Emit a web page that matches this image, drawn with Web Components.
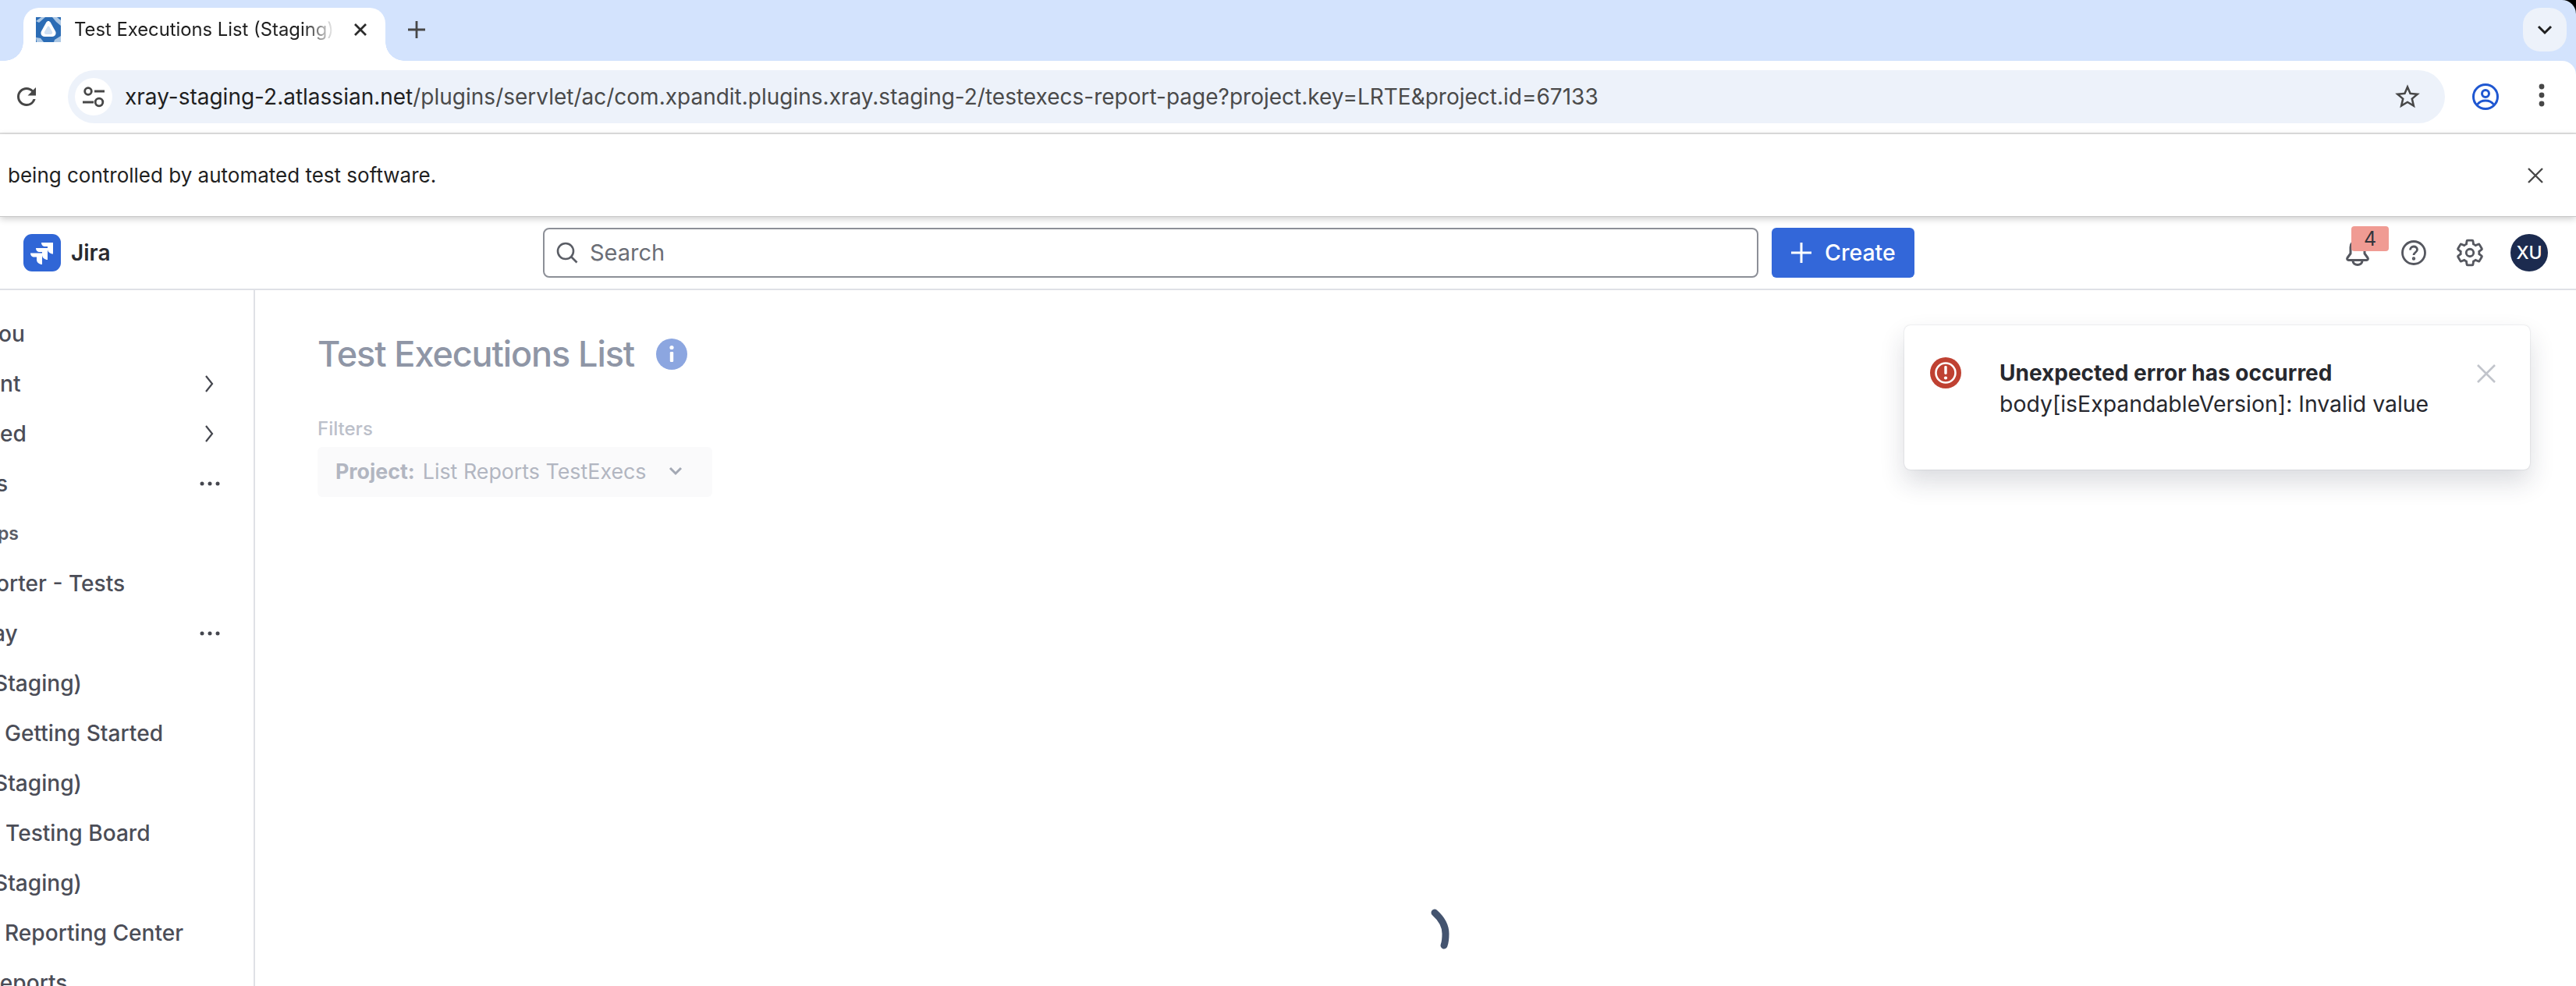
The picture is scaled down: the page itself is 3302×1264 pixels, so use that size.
<!DOCTYPE html>
<html>
<head>
<meta charset="utf-8">
<title>Test Executions List</title>
<style>
  html, body { margin: 0; padding: 0; background: #fff; }
  body { width: 3302px; height: 1264px; overflow: hidden; font-family: Inter, "Liberation Sans", sans-serif; }
</style>
</head>
<body>
<browser-tabs></browser-tabs>
<browser-toolbar></browser-toolbar>
<browser-infobar></browser-infobar>
<jira-app>
  <jira-topbar slot="top"></jira-topbar>
  <jira-sidebar slot="side"></jira-sidebar>
  <report-view slot="main"></report-view>
  <error-toast slot="over"></error-toast>
  <busy-spinner slot="over"></busy-spinner>
</jira-app>
<script>
class BrowserTabs extends HTMLElement {
  constructor() {
    super();
    this.attachShadow({ mode: 'open' });
    this.shadowRoot.innerHTML = `
      <style>
        :host { display: block; height: 78px; background: #000; }
        .strip {
          height: 78px; box-sizing: border-box; padding: 10px 12px 0 30px;
          background: #d3e3fd; border-top-right-radius: 18px;
          display: flex; align-items: flex-start;
        }
        .tab {
          position: relative; width: 464px; height: 68px; box-sizing: border-box;
          padding: 12px 22px 0 16px; background: #fff;
          border-radius: 20px 20px 0 0; display: flex; align-items: flex-start;
        }
        .tab::before, .tab::after {
          content: ""; position: absolute; bottom: 0; width: 24px; height: 24px;
        }
        .tab::before { left: -24px; background: radial-gradient(circle at 0 0, transparent 23.5px, #fff 24px); }
        .tab::after { right: -24px; background: radial-gradient(circle at 100% 0, transparent 23.5px, #fff 24px); }
        .fav { width: 32px; height: 32px; flex: none; }
        .title {
          margin-left: 17px; width: 335px; height: 32px; flex: none;
          font: 400 23.800px/32px Inter, sans-serif; color: #1f1f1f; white-space: nowrap; overflow: hidden;
          -webkit-mask-image: linear-gradient(to right, #000 88%, transparent 100%);
          mask-image: linear-gradient(to right, #000 88%, transparent 100%);
        }
        .close { margin-left: 22px; width: 20px; height: 32px; flex: none; }
        .plus { margin: 14px 0 0 26px; width: 28px; height: 28px; flex: none; }
        .list {
          margin-left: auto; width: 56px; height: 56px; background: #edf2fa; border-radius: 22px;
          display: flex; align-items: center; justify-content: center;
        }
      </style>
      <div class="strip">
        <div class="tab">
          <svg class="fav" viewBox="0 0 32 32">
            <rect width="32" height="32" fill="#2b6cb5"/>
            <path d="M0 5 7 0h5L4 7zM21 0h6l5 4v7l-6-5zM0 26l6 1 4 5H1zM24 29l8-5v8h-9z" fill="#d7e5f4" opacity=".75"/>
            <path d="M16 5c1 0 2 .6 2.600 1.600L25 18c1.600 3-.2 7-4 7H11c-3.800 0-5.600-4-4-7l6.400-11.400C14 5.600 15 5 16 5z" fill="#fff"/>
            <path d="M16 11.500c-.6 0-1 .4-1.300 .9L11.200 18.500c-1 1.900 .1 3.500 2 3.500h5.600c1.900 0 3-1.600 2-3.500l-3.500-6.100c-.3-.5-.7-.9-1.300-.9z" fill="#cfe0f3"/>
          </svg>
          <div class="title">Test Executions List (Staging)</div>
          <svg class="close" viewBox="0 0 20 32"><path d="M3 9l14 14M17 9L3 23" stroke="#2b2b2b" stroke-width="2.800" fill="none"/></svg>
        </div>
        <svg class="plus" viewBox="0 0 28 28"><path d="M14 3v22M3 14h22" stroke="#474747" stroke-width="2.800" fill="none"/></svg>
        <div class="list">
          <svg width="20" height="14" viewBox="0 0 20 14"><path d="M2 3l8 8 8-8" stroke="#1f1f1f" stroke-width="3" fill="none"/></svg>
        </div>
      </div>
    `;
  }
}
customElements.define('browser-tabs', BrowserTabs);

class BrowserToolbar extends HTMLElement {
  constructor() {
    super();
    this.attachShadow({ mode: 'open' });
    this.shadowRoot.innerHTML = `
      <style>
        :host { display: block; height: 94px; background: #d3e3fd; }
        .bar {
          height: 94px; box-sizing: border-box; background: #fff;
          border-top-right-radius: 18px; border-bottom: 2px solid #e1e1e1;
          padding: 12px 28px 0 16px; display: flex; align-items: flex-start;
        }
        .reload { width: 36px; height: 36px; margin-top: 16px; flex: none; }
        .omni {
          margin-left: 35px; width: 3047px; height: 68px; flex: none; box-sizing: border-box;
          padding: 10px 29px 0 9px; background: #edf2fa; border-radius: 34px;
          display: flex; align-items: flex-start;
        }
        .tune {
          width: 48px; height: 48px; border-radius: 50%; background: #fff; flex: none;
          display: flex; align-items: center; justify-content: center;
        }
        .url {
          margin-left: 16px; font: 400 28px/48px Inter, sans-serif;
          color: #4a4a4a; white-space: nowrap;
        }
        .url b { font-weight: 400; color: #1f1f1f; }
        .star { margin-left: auto; margin-top: 5px; width: 38px; height: 38px; flex: none; }
        .who { width: 36px; height: 36px; margin: 16px 0 0 34px; flex: none; }
        .dots { width: 10px; height: 32px; margin: 16px 0 0 49px; flex: none; }
      </style>
      <div class="bar">
        <svg class="reload" viewBox="0 0 24 24"><path fill="#474747" d="M17.650 6.350A7.958 7.958 0 0 0 12 4c-4.420 0-7.990 3.580-7.990 8s3.570 8 7.990 8c3.730 0 6.840-2.550 7.730-6h-2.080A5.990 5.990 0 0 1 12 18c-3.310 0-6-2.690-6-6s2.690-6 6-6c1.660 0 3.140.69 4.220 1.780L13 11h7V4l-2.350 2.350z"/></svg>
        <div class="omni">
          <div class="tune">
            <svg width="36" height="32" viewBox="0 0 36 32" fill="none" stroke="#474747" stroke-width="2.800">
              <circle cx="11" cy="9" r="4.300"/><path d="M19 9h13M4 23h14"/><circle cx="25" cy="23" r="4.800"/>
            </svg>
          </div>
          <div class="url"><b>xray-staging-2.atlassian.net</b>/plugins/servlet/ac/com.xpandit.plugins.xray.staging-2/testexecs-report-page?project.key=LRTE&amp;project.id=67133</div>
          <svg class="star" viewBox="0 0 24 24"><path fill="#474747" d="M22 9.240l-7.190-.62L12 2 9.190 8.630 2 9.240l5.460 4.730L5.820 21 12 17.270 18.180 21l-1.630-7.030L22 9.240zM12 15.400l-3.760 2.270 1-4.280-3.320-2.880 4.380-.38L12 6.100l1.710 4.040 4.380.38-3.320 2.880 1 4.280L12 15.400z"/></svg>
        </div>
        <svg class="who" viewBox="0 0 36 36" fill="none" stroke="#1f57d1" stroke-width="3">
          <circle cx="18" cy="18" r="15.500"/><circle cx="18" cy="14" r="4.500"/><path d="M7.500 28c2.500-3.500 6-5 10.500-5s8 1.500 10.500 5"/>
        </svg>
        <svg class="dots" viewBox="0 0 10 32" fill="#474747"><circle cx="5" cy="5" r="3.400"/><circle cx="5" cy="16" r="3.400"/><circle cx="5" cy="27" r="3.400"/></svg>
      </div>
    `;
  }
}
customElements.define('browser-toolbar', BrowserToolbar);

class BrowserInfobar extends HTMLElement {
  constructor() {
    super();
    this.attachShadow({ mode: 'open' });
    this.shadowRoot.innerHTML = `
      <style>
        :host {
          display: flex; position: relative; z-index: 3; height: 105px; box-sizing: border-box;
          padding: 0 42px 0 10px; align-items: center; justify-content: space-between; background: #fff;
          box-shadow: 0 1px 0 #c9c9c9, 0 3px 9px rgba(0,0,0,.22);
        }
        span { font: 400 26px/32px Inter, sans-serif; color: #1f1f1f; }
      </style>
      <span>being controlled by automated test software.</span>
      <svg width="20" height="20" viewBox="0 0 20 20"><path d="M1 1l18 18M19 1L1 19" stroke="#474747" stroke-width="2.400" fill="none"/></svg>
    `;
  }
}
customElements.define('browser-infobar', BrowserInfobar);

class JiraApp extends HTMLElement {
  constructor() {
    super();
    this.attachShadow({ mode: 'open' });
    this.shadowRoot.innerHTML = `
      <style>
        :host { display: block; position: relative; height: 987px; overflow: hidden; background: #fff; }
        .body { display: flex; height: 892px; }
      </style>
      <slot name="top"></slot>
      <div class="body">
        <slot name="side"></slot>
        <slot name="main"></slot>
      </div>
      <slot name="over"></slot>
    `;
  }
}
customElements.define('jira-app', JiraApp);

class JiraTopbar extends HTMLElement {
  constructor() {
    super();
    this.attachShadow({ mode: 'open' });
    this.shadowRoot.innerHTML = `
      <style>
        :host {
          display: flex; height: 95px; box-sizing: border-box; border-bottom: 2px solid #dfe1e6;
          padding: 0 36px 0 30px; align-items: center; background: #fff;
        }
        .mark { width: 48px; height: 48px; flex: none; }
        .name { margin-left: 13px; width: 605px; font: 600 28px/34px Inter, sans-serif; color: #292a2e; }
        .search {
          width: 1558px; height: 64px; box-sizing: border-box; flex: none;
          border: 2px solid #8c8f97; border-radius: 8px; display: flex; align-items: center; padding-left: 15px;
        }
        .search span { margin-left: 15px; font: 400 29px/36px Inter, sans-serif; color: #6b6e76; }
        .create {
          margin-left: 17px; width: 183px; height: 64px; flex: none; box-sizing: border-box; border-radius: 6px;
          background: #3367d9; color: #fff; display: flex; align-items: center; padding-left: 24px;
          font: 500 28.500px/36px Inter, sans-serif;
        }
        .create span { margin-left: 16px; }
        .right { margin-left: auto; display: flex; align-items: center; }
        .bell { position: relative; width: 40px; height: 48px; margin-right: 38px; }
        .badge {
          position: absolute; left: 14px; top: -10px; width: 48px; height: 32px; background: #f09b93;
          border-radius: 4px; color: #33353c; font: 400 25px/32px Inter, sans-serif; text-align: center;
        }
        .help { width: 32px; height: 32px; margin-right: 37px; }
        .gear { width: 38px; height: 38px; margin-right: 33px; }
        .avatar {
          width: 48px; height: 48px; border-radius: 50%; background: #1c2b4f; color: #fff;
          font: 500 23px/48px Inter, sans-serif; text-align: center;
        }
      </style>
      <svg class="mark" viewBox="0 0 48 48">
        <rect width="48" height="48" rx="11" fill="#3066d6"/>
        <path fill="#fff" d="M23 11h15v14.500c-3.500 0-7-2.500-7-6V16h-3c-3 0-5-2-5-5z"/>
        <path fill="#fff" d="M16 18h15v15c-3.500 0-7-2.500-7-6v-4h-3c-3 0-5-2-5-5z"/>
        <path fill="#fff" d="M9 24.500h15V39c-3.500 0-7-2.500-7-6v-3.500h-3c-3 0-5-2-5-5z"/>
      </svg>
      <div class="name">Jira</div>
      <div class="search">
        <svg width="28" height="28" viewBox="0 0 28 28" fill="none" stroke="#5a5d65" stroke-width="2.600"><circle cx="12" cy="12" r="10"/><path d="M19 19l7.500 7.500"/></svg>
        <span>Search</span>
      </div>
      <div class="create">
        <svg width="28" height="28" viewBox="0 0 28 28"><path d="M14 1v26M1 14h26" stroke="#fff" stroke-width="3" fill="none"/></svg>
        <span>Create</span>
      </div>
      <div class="right">
        <div class="bell">
          <svg width="40" height="48" viewBox="0 0 40 48" fill="none" stroke="#55575f" stroke-width="3" stroke-linejoin="round">
            <path d="M22 8a9 9 0 0 0-9 9v8l-4 5.500c-1 1.500 0 3 1.500 3h23c1.500 0 2.500-1.500 1.500-3l-4-5.500v-8a9 9 0 0 0-9-9z"/><path d="M16 34.500a6 5 0 0 0 12 0"/>
          </svg>
          <div class="badge">4</div>
        </div>
        <svg class="help" viewBox="0 0 32 32" fill="none" stroke="#55575f" stroke-width="2.800">
          <circle cx="16" cy="16" r="14.500"/><path d="M11.500 12.500c0-2.800 2-4.500 4.500-4.500s4.500 1.700 4.500 4c0 3.500-4.500 3.500-4.500 7"/><circle cx="16" cy="23.500" r=".8" fill="#55575f"/>
        </svg>
        <svg class="gear" viewBox="0 0 24 24" fill="none" stroke="#55575f" stroke-width="1.800">
          <path d="M19.430 12.980c.04-.32.07-.64.07-.98s-.03-.66-.07-.98l2.110-1.650c.19-.15.24-.42.12-.64l-2-3.460c-.12-.22-.39-.3-.61-.22l-2.490 1c-.52-.4-1.080-.73-1.690-.98l-.38-2.650A.488.488 0 0 0 14 2h-4c-.25 0-.46.18-.49.42l-.38 2.650c-.61.25-1.170.59-1.690.98l-2.490-1c-.23-.09-.49 0-.61.22l-2 3.460c-.13.22-.07.49.12.64l2.110 1.650c-.04.32-.07.65-.07.98s.03.66.07.98l-2.110 1.650c-.19.15-.24.42-.12.64l2 3.460c.12.22.39.3.61.22l2.490-1c.52.4 1.080.73 1.690.98l.38 2.650c.03.24.24.42.49.42h4c.25 0 .46-.18.49-.42l.38-2.650c.61-.25 1.170-.59 1.690-.98l2.490 1c.23.09.49 0 .61-.22l2-3.460c.12-.22.07-.49-.12-.64l-2.110-1.650z"/>
          <circle cx="12" cy="12" r="3"/>
        </svg>
        <div class="avatar">XU</div>
      </div>
    `;
  }
}
customElements.define('jira-topbar', JiraTopbar);

class SideItem extends HTMLElement {
  constructor() {
    super();
    this.attachShadow({ mode: 'open' });
    const kind = this.getAttribute('kind');
    const arrow = '<svg width="12" height="22" viewBox="0 0 12 22"><path d="M2 1l8 10-8 10" stroke="#44464e" stroke-width="2.200" fill="none"/></svg>';
    const dots = '<svg width="26" height="6" viewBox="0 0 26 6" fill="#44464e"><circle cx="3" cy="3" r="2.500"/><circle cx="13" cy="3" r="2.500"/><circle cx="23" cy="3" r="2.500"/></svg>';
    const tail = kind === 'arrow' ? arrow : kind === 'dots' ? dots : '';
    this.shadowRoot.innerHTML = `
      <style>
        :host {
          display: flex; height: 64px; align-items: center; justify-content: space-between;
          padding-right: 43px; box-sizing: border-box;
        }
        :host([kind="arrow"]) { padding-right: 51px; }
        :host([kind="head"]) span { font-size: 23px; font-weight: 600; color: #5a5c66; }
        span {
          margin-left: var(--inset, 0px); white-space: nowrap;
          font: 500 28.100px/36px Inter, sans-serif; color: #4b4d57;
        }
      </style>
      <span><slot></slot></span>
      ${tail}
    `;
  }
}
customElements.define('side-item', SideItem);

class JiraSidebar extends HTMLElement {
  constructor() {
    super();
    this.attachShadow({ mode: 'open' });
    this.shadowRoot.innerHTML = `
      <style>
        :host {
          display: block; width: 327px; flex: none; box-sizing: border-box; overflow: hidden;
          border-right: 2px solid #dfe1e6; padding-top: 24px; height: 892px;
        }
      </style>
      <side-item style="--inset:-2px">ou</side-item>
      <side-item kind="arrow" style="--inset:0px">nt</side-item>
      <side-item kind="arrow" style="--inset:0px">ed</side-item>
      <side-item kind="dots" style="--inset:-5px">s</side-item>
      <side-item kind="head" style="--inset:-3px">ps</side-item>
      <side-item style="--inset:-5px">orter - Tests</side-item>
      <side-item kind="dots" style="--inset:-9px">ay</side-item>
      <side-item style="--inset:-8px">Staging)</side-item>
      <side-item style="--inset:6px">Getting Started</side-item>
      <side-item style="--inset:-8px">Staging)</side-item>
      <side-item style="--inset:7px">Testing Board</side-item>
      <side-item style="--inset:-8px">Staging)</side-item>
      <side-item style="--inset:6px">Reporting Center</side-item>
      <side-item style="--inset:-18px">Reports</side-item>
    `;
  }
}
customElements.define('jira-sidebar', JiraSidebar);

class ReportView extends HTMLElement {
  constructor() {
    super();
    this.attachShadow({ mode: 'open' });
    this.shadowRoot.innerHTML = `
      <style>
        :host { display: block; flex: 1; box-sizing: border-box; padding: 54px 0 0 80px; }
        .head { display: flex; align-items: center; height: 56px; }
        h1 { margin: 0; font: 500 45px/56px Inter, sans-serif; letter-spacing: -1.100px; color: #8f96a6; }
        .info { margin-left: 28px; width: 40px; height: 40px; flex: none; }
        .label { margin-top: 53px; font: 500 24px/30px Inter, sans-serif; color: #bcc0ca; }
        .drop {
          margin-top: 8px; width: 506px; height: 64px; box-sizing: border-box; border-radius: 6px;
          background: #fafafb; display: flex; align-items: center; padding: 0 0 2px 23px;
          font: 400 26.800px/36px Inter, sans-serif; color: #b2b6c1; white-space: nowrap;
        }
        .drop b { font-weight: 700; margin-right: 10px; }
        .drop svg { margin-left: 28px; }
      </style>
      <div class="head">
        <h1>Test Executions List</h1>
        <svg class="info" viewBox="0 0 40 40"><circle cx="20" cy="20" r="20" fill="#8ca6e0"/><rect x="17.800" y="17" width="4.400" height="13" rx="1.200" fill="#fff"/><circle cx="20" cy="11.500" r="2.600" fill="#fff"/></svg>
      </div>
      <div class="label">Filters</div>
      <div class="drop">
        <b>Project:</b>List Reports TestExecs
        <svg width="18" height="12" viewBox="0 0 18 12"><path d="M2 2l7 7 7-7" stroke="#a3a8b4" stroke-width="3" fill="none"/></svg>
      </div>
    `;
  }
}
customElements.define('report-view', ReportView);

class ErrorToast extends HTMLElement {
  constructor() {
    super();
    this.attachShadow({ mode: 'open' });
    this.shadowRoot.innerHTML = `
      <style>
        :host {
          position: absolute; left: 2441px; top: 140px; width: 802px; height: 185px; box-sizing: border-box;
          display: flex; padding: 41px 0 0 33px; background: #fff; border-radius: 8px;
          box-shadow: 0 16px 32px rgba(30,40,60,.16), 0 0 2px rgba(30,40,60,.2);
        }
        .mark { width: 40px; height: 40px; flex: none; }
        .text { margin: 0 0 0 49px; width: 570px; flex: none; }
        .t { font: 700 28px/40px Inter, sans-serif; color: #27282e; }
        .b { font: 400 28.400px/40px Inter, sans-serif; color: #27282e; }
        .x { margin-left: 42px; margin-top: 9px; width: 24px; height: 24px; flex: none; }
      </style>
      <svg class="mark" viewBox="0 0 40 40">
        <circle cx="20" cy="20" r="20" fill="#bf4132"/><circle cx="20" cy="20" r="12.500" fill="none" stroke="#fff" stroke-width="2.600"/>
        <rect x="18.300" y="11" width="3.400" height="11" rx="1.400" fill="#fff"/><circle cx="20" cy="26.500" r="2.100" fill="#fff"/>
      </svg>
      <div class="text">
        <div class="t">Unexpected error has occurred</div>
        <div class="b">body[isExpandableVersion]: Invalid value</div>
      </div>
      <svg class="x" viewBox="0 0 24 24"><path d="M1 1l22 22M23 1L1 23" stroke="#c1c4cb" stroke-width="2.600" fill="none"/></svg>
    `;
  }
}
customElements.define('error-toast', ErrorToast);

class BusySpinner extends HTMLElement {
  constructor() {
    super();
    this.attachShadow({ mode: 'open' });
    this.shadowRoot.innerHTML = `
      <style>
        :host { position: absolute; left: 1832px; top: 885px; width: 32px; height: 64px; display: block; }
      </style>
      <svg width="32" height="64" viewBox="0 0 32 64">
        <path d="M7 8c9 8 14 17 14 27 0 6-.5 11-2 15" fill="none" stroke="#44546f" stroke-width="9" stroke-linecap="round"/>
      </svg>
    `;
  }
}
customElements.define('busy-spinner', BusySpinner);
</script>
</body>
</html>
